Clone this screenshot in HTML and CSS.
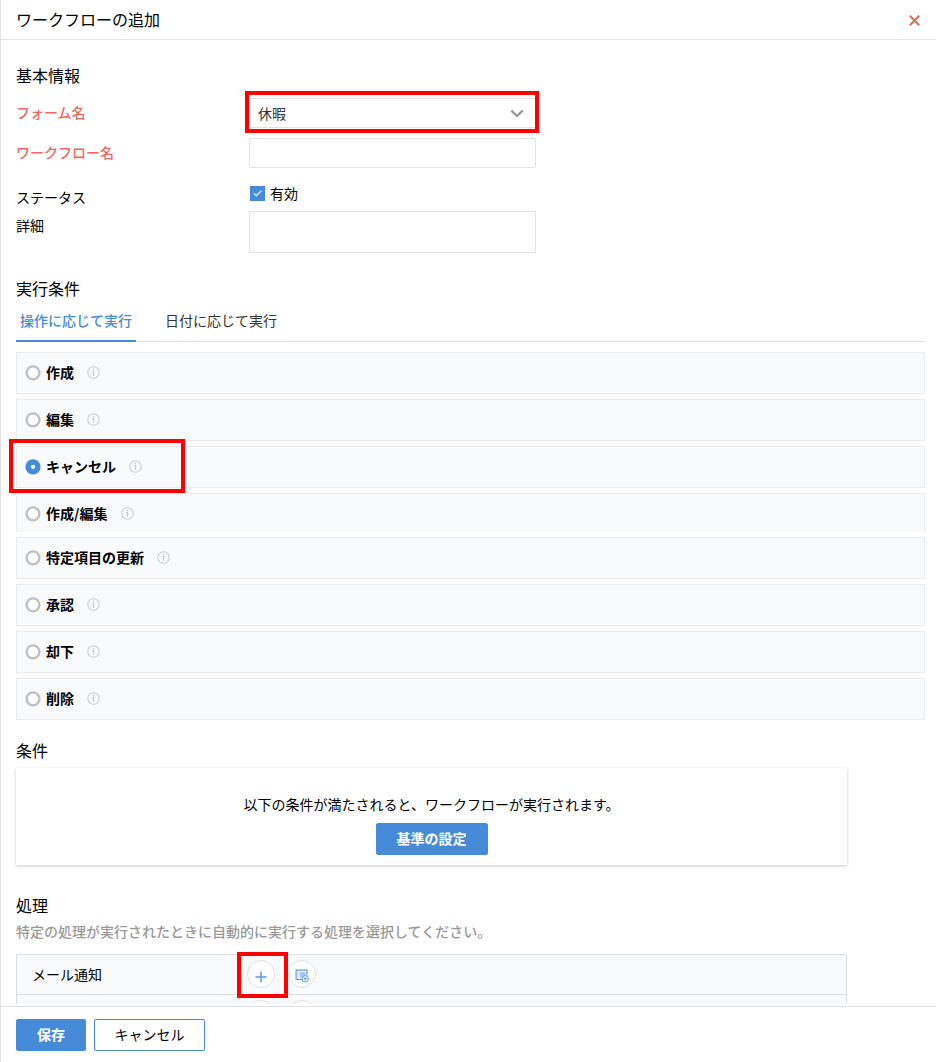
FILE: index.html
```
<!DOCTYPE html>
<html lang="ja">
<head>
    <meta charset="UTF-8">
    <meta name="viewport" content="width=device-width, initial-scale=1.0">
    <title>ワークフローの追加</title>
    <link rel="stylesheet" href="styles.css">
</head>
<body>

    <!-- Shared icons -->
    <svg class="icon-defs" width="0" height="0">
        <symbol id="icon-radio" viewBox="0 0 16 16">
            <circle cx="8" cy="7.8" r="6.4" fill="#fff" stroke="#c0c0c0" stroke-width="2.4"/>
        </symbol>
        <symbol id="icon-radio-on" viewBox="0 0 16 16">
            <circle cx="8" cy="7.8" r="7.6" fill="#468bd8"/>
            <circle cx="8" cy="7.8" r="2.1" fill="#fff"/>
        </symbol>
        <symbol id="icon-info" viewBox="0 0 13 13">
            <circle cx="6.5" cy="6.5" r="5.7" fill="none" stroke="#cbcbcb" stroke-width="1.1"/>
            <path d="M5.2 5.4h1.4v4.4" fill="none" stroke="#c6c6c6" stroke-width="1.1"/>
            <rect x="5.9" y="2.7" width="1.3" height="1.4" fill="#c6c6c6"/>
        </symbol>
        <symbol id="icon-plus" viewBox="0 0 12 12">
            <path d="M6 0.5v11M0.5 6h11" fill="none" stroke="#5a9be0" stroke-width="1.5"/>
        </symbol>
        <symbol id="icon-list-add" viewBox="0 0 14 14">
            <path d="M7.5 10.5H1.1V1.1h10.8V6.5" fill="none" stroke="#5a9be0" stroke-width="1.2"/>
            <path d="M2.6 3.5h1M2.6 5.7h1M2.6 7.9h1" stroke="#5a9be0" stroke-width="1"/>
            <path d="M4.6 2.9h5.9v3L7.2 8.6H4.6z" fill="#a5c9ee"/>
            <circle cx="10.2" cy="9.8" r="3.2" fill="#fff" stroke="#5a9be0" stroke-width="1"/>
            <path d="M10.2 8v3.6M8.4 9.8h3.6" stroke="#5a9be0" stroke-width="1.1"/>
        </symbol>
    </svg>

    <div class="panel">
        <header class="panel-header">
            <h1>ワークフローの追加</h1>
            <button type="button" class="close-btn" aria-label="閉じる">
                <svg width="11" height="11" viewBox="0 0 11 11"><path d="M0.8 0.8l9.4 9.4M10.2 0.8l-9.4 9.4" stroke="#e4695e" stroke-width="2.1"/></svg>
            </button>
        </header>

        <main class="panel-body">
            <!-- Basic information -->
            <h2>基本情報</h2>
            <div class="form-field">
                <label class="required">フォーム名</label>
                <div class="select">
                    <span>休暇</span>
                    <svg width="14" height="9" viewBox="0 0 14 9"><path d="M1.3 1.6L7 7l5.7-5.4" fill="none" stroke="#969696" stroke-width="2.3"/></svg>
                    <div class="highlight highlight-select"></div>
                </div>
            </div>
            <div class="form-field">
                <label class="required" for="workflowName">ワークフロー名</label>
                <input type="text" id="workflowName">
            </div>
            <div class="form-field status-field">
                <label>ステータス</label>
                <div class="check">
                    <span class="checkbox"><svg width="9" height="7" viewBox="0 0 9 7"><path d="M0.7 3.3l2.6 2.4 5-4.9" fill="none" stroke="#fff" stroke-width="1.1"/></svg></span>
                    <span>有効</span>
                </div>
            </div>
            <div class="form-field detail-field">
                <label for="detail">詳細</label>
                <textarea id="detail"></textarea>
            </div>

            <!-- Triggers -->
            <h2 class="trigger-title">実行条件</h2>
            <div class="tabs">
                <div class="tab active">操作に応じて実行</div>
                <div class="tab">日付に応じて実行</div>
            </div>
            <div class="options">
                <div class="option"><svg class="radio"><use href="#icon-radio"/></svg><b>作成</b><svg class="info"><use href="#icon-info"/></svg></div>
                <div class="option"><svg class="radio"><use href="#icon-radio"/></svg><b>編集</b><svg class="info"><use href="#icon-info"/></svg></div>
                <div class="option">
                    <svg class="radio"><use href="#icon-radio-on"/></svg><b>キャンセル</b><svg class="info"><use href="#icon-info"/></svg>
                    <div class="highlight highlight-option"></div>
                </div>
                <div class="option open"><svg class="radio"><use href="#icon-radio"/></svg><b>作成/編集</b><svg class="info"><use href="#icon-info"/></svg></div>
                <div class="option"><svg class="radio"><use href="#icon-radio"/></svg><b>特定項目の更新</b><svg class="info"><use href="#icon-info"/></svg></div>
                <div class="option"><svg class="radio"><use href="#icon-radio"/></svg><b>承認</b><svg class="info"><use href="#icon-info"/></svg></div>
                <div class="option"><svg class="radio"><use href="#icon-radio"/></svg><b>却下</b><svg class="info"><use href="#icon-info"/></svg></div>
                <div class="option"><svg class="radio"><use href="#icon-radio"/></svg><b>削除</b><svg class="info"><use href="#icon-info"/></svg></div>
            </div>

            <!-- Criteria -->
            <h2 class="criteria-title">条件</h2>
            <div class="criteria-card">
                <p>以下の条件が満たされると、ワークフローが実行されます。</p>
                <button type="button" class="btn btn-primary btn-criteria">基準の設定</button>
            </div>

            <!-- Actions -->
            <h2 class="action-title">処理</h2>
            <p class="hint">特定の処理が実行されたときに自動的に実行する処理を選択してください。</p>
            <div class="actions">
                <div class="action-row">
                    <span class="action-name">メール通知</span>
                    <div class="action-btn-wrap">
                        <button type="button" class="round-btn" aria-label="追加"><svg class="plus"><use href="#icon-plus"/></svg></button>
                        <div class="highlight highlight-add"></div>
                    </div>
                    <button type="button" class="round-btn" aria-label="一覧から追加"><svg class="list-add"><use href="#icon-list-add"/></svg></button>
                </div>
                <div class="action-row">
                    <span class="action-name"></span>
                    <div class="action-btn-wrap">
                        <button type="button" class="round-btn" aria-label="追加"></button>
                    </div>
                    <button type="button" class="round-btn" aria-label="一覧から追加"></button>
                </div>
            </div>
        </main>

        <footer class="panel-footer">
            <button type="button" class="btn btn-primary btn-save">保存</button>
            <button type="button" class="btn btn-cancel">キャンセル</button>
        </footer>
    </div>

</body>
</html>
```
FILE: styles.css
```
/* Base */
* {
    box-sizing: border-box;
}

body {
    margin: 0;
    background: #fff;
    color: #000;
    font-family: "Noto Sans CJK JP", sans-serif;
    font-size: 14px;
    line-height: 24px;
}

h1, h2, p {
    margin: 0;
    font-weight: normal;
}

h1, h2 {
    padding-bottom: 2px;
    font-size: 16px;
    line-height: 22px;
}

button, input, textarea {
    font-family: inherit;
    font-size: 14px;
}

.icon-defs {
    position: absolute;
}

/* Panel */
.panel {
    display: flex;
    flex-direction: column;
    height: 1062px;
    border-left: 1px solid #e2e2e2;
}

.panel-header {
    display: flex;
    align-items: center;
    justify-content: space-between;
    flex: none;
    height: 40px;
    padding: 0 16px 0 15px;
    border-bottom: 1px solid #e2e2e2;
}

.close-btn {
    display: flex;
    padding: 1px 0 0;
    border: 0;
    background: none;
}

.panel-body {
    flex: none;
    height: 964px;
    padding: 24px 11px 0 15px;
    overflow: hidden;
}

.panel-footer {
    display: flex;
    flex: none;
    gap: 8px;
    height: 56px;
    margin-top: 2px;
    padding: 12px 15px 0;
    border-top: 1px solid #e2e2e2;
}

/* Form fields */
.form-field {
    display: flex;
    align-items: flex-start;
    margin-top: 10px;
}

.form-field label {
    width: 233px;
    line-height: 28px;
}

.form-field .required {
    color: #e96a5f;
    font-weight: 500;
}

.select, input, textarea {
    width: 287px;
    height: 30px;
    margin: 0;
    border: 1px solid #e2e2e2;
    border-radius: 2px;
    background: #fff;
}

.select {
    position: relative;
    display: flex;
    align-items: center;
    justify-content: space-between;
    padding: 0 11px 0 8px;
    color: #333;
}

textarea {
    height: 42px;
    resize: none;
}

.status-field {
    margin-top: 13px;
}

.form-field.status-field label {
    padding-top: 4px;
    line-height: 24px;
}

.detail-field {
    margin-top: 2px;
}

.check {
    display: flex;
    align-items: center;
    gap: 5px;
    padding-left: 1px;
}

.checkbox {
    display: flex;
    align-items: center;
    justify-content: center;
    width: 15px;
    height: 15px;
    background: #468bd8;
}

/* Tabs */
.trigger-title {
    margin-top: 24px;
}

.tabs {
    display: flex;
    gap: 25px;
    border-bottom: 1px solid #dcdcdc;
}

.tab {
    margin-bottom: -1px;
    padding: 0 4px 1px;
    border-bottom: 2px solid transparent;
    color: #333;
    line-height: 38px;
}

.tab.active {
    border-color: #468bd8;
    color: #468bd8;
    font-weight: 500;
}

/* Trigger options */
.options {
    display: flex;
    flex-direction: column;
    gap: 5px;
    margin-top: 10px;
}

.option {
    position: relative;
    display: flex;
    align-items: center;
    height: 42px;
    padding: 0 8px 2px;
    border: 1px solid #ebebeb;
    background: #f9fafc;
}

.option.open {
    height: 39px;
    padding-bottom: 0;
    border-bottom: 0;
}

.radio {
    width: 16px;
    height: 16px;
    margin: 2px 5px 0 0;
}

.info {
    width: 13px;
    height: 13px;
    margin-left: 13px;
}

.open .info {
    margin-left: 14px;
}

/* Criteria */
.criteria-title {
    margin-top: 19px;
}

.criteria-card {
    width: 831px;
    height: 97px;
    margin-top: 5px;
    padding-top: 24px;
    box-shadow: 0 1px 3px rgba(0, 0, 0, 0.22);
    text-align: center;
}

/* Buttons */
.btn {
    height: 32px;
    padding: 0 0 2px;
    border: 1px solid #468bd8;
    border-radius: 2px;
    background: #fff;
    color: #000;
}

.btn-primary {
    background: #468bd8;
    color: #fff;
    font-weight: bold;
}

.btn-criteria {
    display: block;
    width: 112px;
    margin: 7px auto 0;
}

.btn-save {
    width: 70px;
}

.btn-cancel {
    width: 111px;
}

/* Actions */
.action-title {
    margin-top: 29px;
}

.hint {
    margin-top: 1px;
    color: #999;
    font-weight: 500;
}

.actions {
    width: 831px;
    margin-top: 11px;
    border: 1px solid #dcdcdc;
    border-top: 0;
    border-radius: 2px 2px 0 0;
    background: #f9fafc;
}

.action-row {
    display: flex;
    height: 40px;
    padding: 5px 0 0 15px;
    border-top: 1px solid #dcdcdc;
}

.action-name {
    width: 215px;
    line-height: 29px;
}

.action-btn-wrap {
    position: relative;
    margin-right: 13px;
}

.round-btn {
    display: flex;
    align-items: center;
    justify-content: center;
    width: 28px;
    height: 28px;
    padding: 0;
    border: 1px solid #e0e0e0;
    border-radius: 50%;
    background: #fff;
}

.plus {
    width: 12px;
    height: 12px;
    margin-top: 6px;
}

.list-add {
    width: 14px;
    height: 14px;
    margin-top: 3px;
}

/* Red frames over the controls */
.highlight {
    position: absolute;
    border: 4px solid #f00;
}

.highlight-select {
    top: -8px;
    left: -5px;
    width: 294px;
    height: 42px;
}

.highlight-option {
    top: -8px;
    left: -8px;
    width: 176px;
    height: 54px;
}

.highlight-add {
    top: -8px;
    left: -10px;
    width: 51px;
    height: 46px;
}
```
